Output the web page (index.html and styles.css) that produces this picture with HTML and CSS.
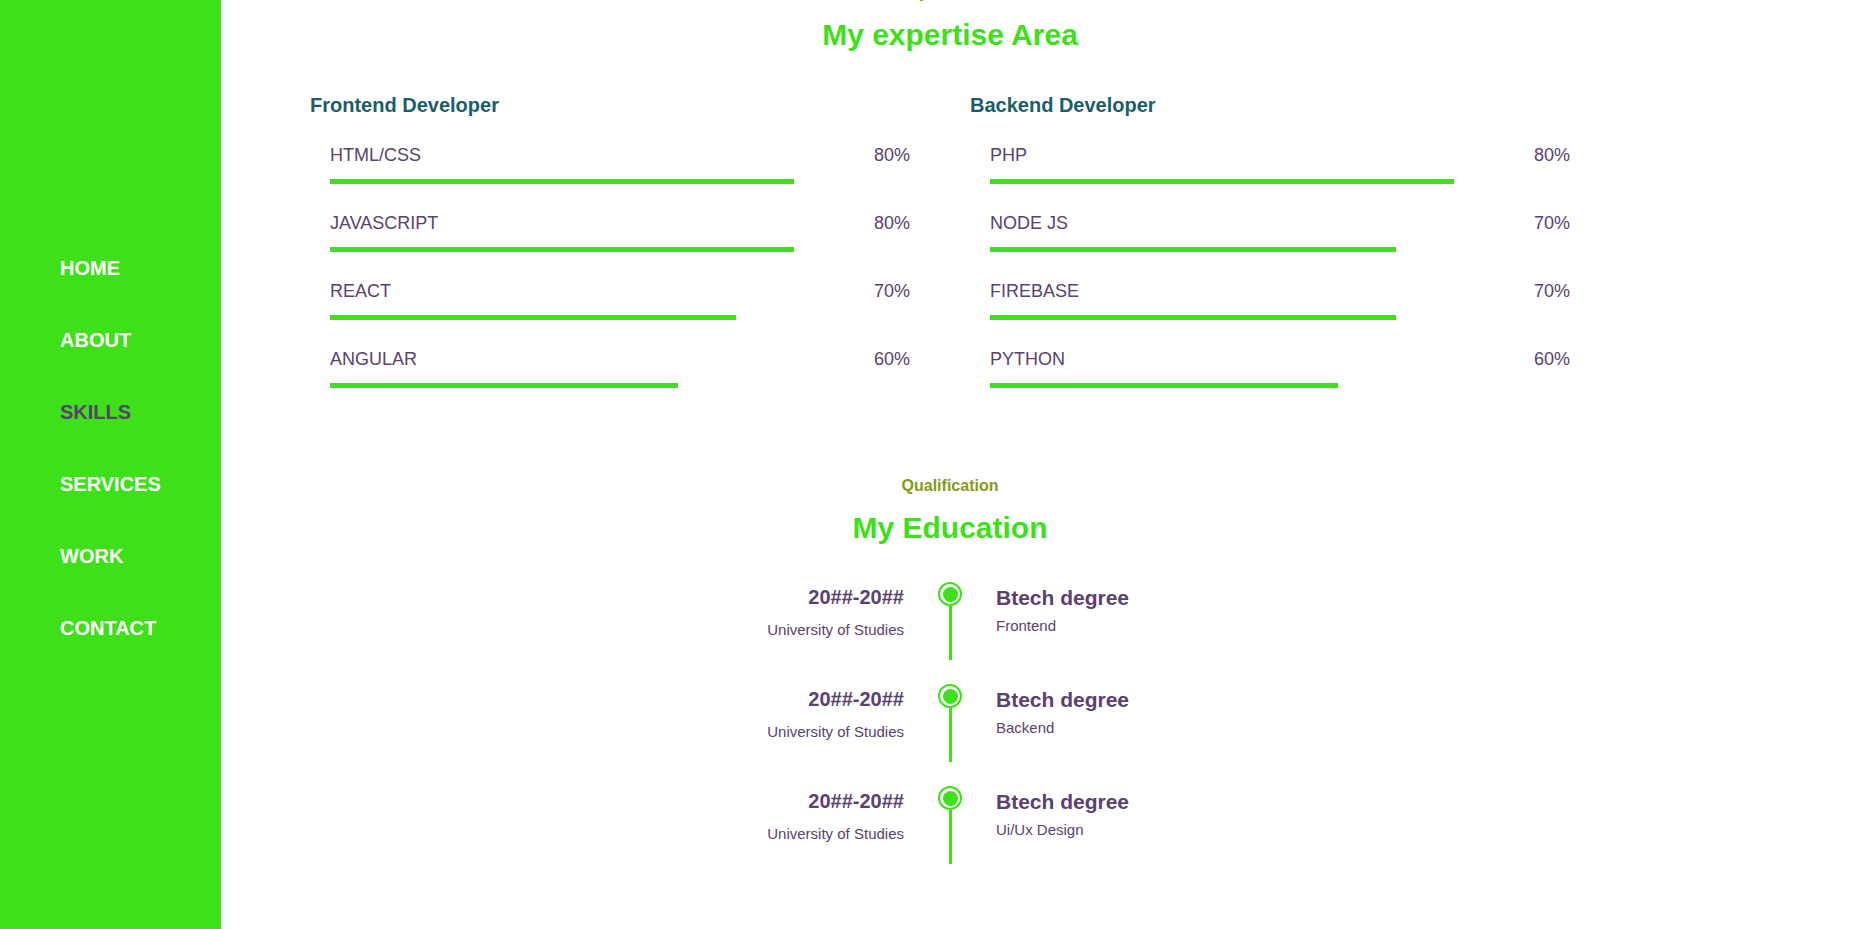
FILE: index.html
```
<!DOCTYPE html>
<html lang="en">
<head>
<meta charset="utf-8">
<title>Skills</title>
<link rel="stylesheet" href="styles.css">
</head>
<body>
<div class="page">
  <aside class="sidebar">
    <nav class="nav">
      <a class="nav-link" href="#">HOME</a>
      <a class="nav-link" href="#">ABOUT</a>
      <a class="nav-link active" href="#">SKILLS</a>
      <a class="nav-link" href="#">SERVICES</a>
      <a class="nav-link" href="#">WORK</a>
      <a class="nav-link" href="#">CONTACT</a>
    </nav>
  </aside>
  <main class="main">
    <div class="container">
      <section class="skills">
        <p class="subtitle">My Abilities</p>
        <h2 class="title">My expertise Area</h2>
        <div class="skill-columns">
          <div class="skill-group">
            <h3 class="group-title">Frontend Developer</h3>
            <div class="skill">
              <div class="skill-head"><span>HTML/CSS</span><span>80%</span></div>
              <div class="bar" style="width:80%"></div>
            </div>
            <div class="skill">
              <div class="skill-head"><span>JAVASCRIPT</span><span>80%</span></div>
              <div class="bar" style="width:80%"></div>
            </div>
            <div class="skill">
              <div class="skill-head"><span>REACT</span><span>70%</span></div>
              <div class="bar" style="width:70%"></div>
            </div>
            <div class="skill">
              <div class="skill-head"><span>ANGULAR</span><span>60%</span></div>
              <div class="bar" style="width:60%"></div>
            </div>
          </div>
          <div class="skill-group">
            <h3 class="group-title">Backend Developer</h3>
            <div class="skill">
              <div class="skill-head"><span>PHP</span><span>80%</span></div>
              <div class="bar" style="width:80%"></div>
            </div>
            <div class="skill">
              <div class="skill-head"><span>NODE JS</span><span>70%</span></div>
              <div class="bar" style="width:70%"></div>
            </div>
            <div class="skill">
              <div class="skill-head"><span>FIREBASE</span><span>70%</span></div>
              <div class="bar" style="width:70%"></div>
            </div>
            <div class="skill">
              <div class="skill-head"><span>PYTHON</span><span>60%</span></div>
              <div class="bar" style="width:60%"></div>
            </div>
          </div>
        </div>
      </section>

      <section class="education">
        <p class="subtitle">Qualification</p>
        <h2 class="title">My Education</h2>
        <div class="timeline">
          <div class="edu-item">
            <div class="edu-left">
              <h4 class="edu-date">20##-20##</h4>
              <p class="edu-place">University of Studies</p>
            </div>
            <div class="edu-mark">
              <span class="dot"><span class="dot-inner"></span></span>
              <span class="line"></span>
            </div>
            <div class="edu-right">
              <h4 class="edu-degree">Btech degree</h4>
              <p class="edu-field">Frontend</p>
            </div>
          </div>
          <div class="edu-item">
            <div class="edu-left">
              <h4 class="edu-date">20##-20##</h4>
              <p class="edu-place">University of Studies</p>
            </div>
            <div class="edu-mark">
              <span class="dot"><span class="dot-inner"></span></span>
              <span class="line"></span>
            </div>
            <div class="edu-right">
              <h4 class="edu-degree">Btech degree</h4>
              <p class="edu-field">Backend</p>
            </div>
          </div>
          <div class="edu-item">
            <div class="edu-left">
              <h4 class="edu-date">20##-20##</h4>
              <p class="edu-place">University of Studies</p>
            </div>
            <div class="edu-mark">
              <span class="dot"><span class="dot-inner"></span></span>
              <span class="line"></span>
            </div>
            <div class="edu-right">
              <h4 class="edu-degree">Btech degree</h4>
              <p class="edu-field">Ui/Ux Design</p>
            </div>
          </div>
        </div>
      </section>
    </div>
  </main>
</div>
</body>
</html>
```
FILE: styles.css
```
* {
  box-sizing: border-box;
}

html, body {
  margin: 0;
  padding: 0;
  height: 100%;
}

body {
  font-family: "Liberation Sans", Arial, sans-serif;
  color: #5b4170;
  background: #ffffff;
  overflow: hidden;
}

.page {
  display: flex;
  height: 929px;
  overflow: hidden;
}

.sidebar {
  flex: 0 0 221px;
  width: 221px;
  height: 100%;
  background: #3ee01a;
}

.nav {
  display: flex;
  flex-direction: column;
  padding: 232px 0 0 60px;
}

.nav-link {
  display: block;
  height: 72px;
  line-height: 72px;
  font-size: 20px;
  font-weight: 700;
  color: #ffffff;
  text-decoration: none;
}

.nav-link.active {
  color: #5b4170;
}

.main {
  flex: 1 1 auto;
  padding-left: 89px;
}

.container {
  width: 1280px;
}

.skills {
  margin-top: -16px;
}

.subtitle {
  margin: 0 0 16px;
  text-align: center;
  font-size: 16px;
  font-weight: 700;
  color: #839b17;
}

.title {
  margin: 0;
  text-align: center;
  font-size: 30px;
  font-weight: 700;
  color: #3ee01a;
}

.skill-columns {
  display: grid;
  grid-template-columns: 620px 620px;
  column-gap: 40px;
  margin-top: 42px;
}

.group-title {
  margin: 0 0 28px;
  font-size: 20px;
  font-weight: 700;
  color: #1a5e6a;
}

.skill {
  padding: 0 20px;
  margin-bottom: 29px;
}

.skill-head {
  display: flex;
  justify-content: space-between;
  font-size: 18px;
  line-height: 21px;
  color: #5b4170;
}

.bar {
  height: 5px;
  margin-top: 13px;
  background: #3ee01a;
}

.education {
  margin-top: 60px;
}

.timeline {
  width: 640px;
  margin: 37px auto 0;
}

.edu-item {
  display: grid;
  grid-template-columns: 1fr 24px 1fr;
  column-gap: 34px;
  height: 102px;
}

.edu-left {
  text-align: right;
}

.edu-date {
  margin: 4px 0 0;
  font-size: 20px;
  font-weight: 700;
  color: #5b4170;
}

.edu-place {
  margin: 12px 0 0;
  font-size: 15px;
  color: #5b4170;
}

.edu-mark {
  display: flex;
  flex-direction: column;
  align-items: center;
}

.dot {
  display: flex;
  align-items: center;
  justify-content: center;
  width: 24px;
  height: 24px;
  border: 2px solid #3ee01a;
  border-radius: 50%;
  background: #ffffff;
}

.dot-inner {
  width: 15px;
  height: 15px;
  border-radius: 50%;
  background: #3ee01a;
}

.line {
  width: 3px;
  height: 54px;
  background: #3ee01a;
}

.edu-degree {
  margin: 4px 0 0;
  font-size: 21px;
  font-weight: 700;
  color: #5b4170;
}

.edu-field {
  margin: 7px 0 0;
  font-size: 15px;
  color: #5b4170;
}
```
